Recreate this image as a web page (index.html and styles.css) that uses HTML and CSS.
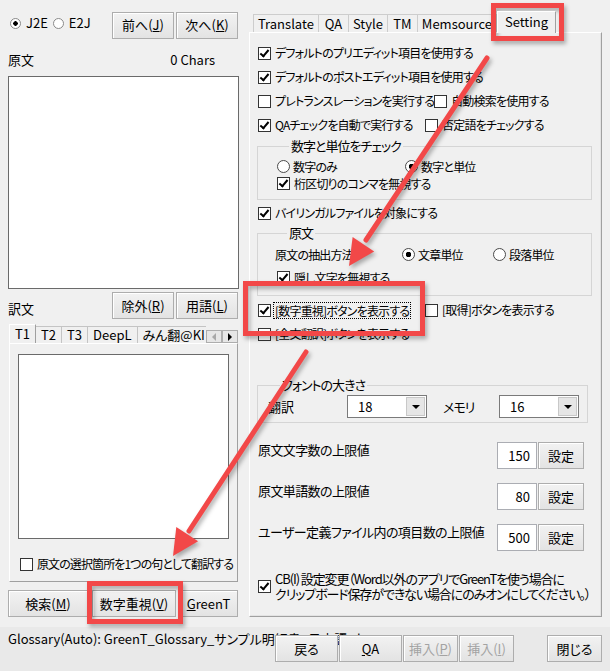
FILE: index.html
```html
<!DOCTYPE html>
<html lang="ja">
<head>
    <meta charset="UTF-8">
    <title>GreenT - Setting</title>
    <link rel="stylesheet" href="styles.css">
</head>
<body>
<div class="app">
    <div class="main">
        <div class="left">
            <div class="top-row">
                <div class="mode">
                    <span class="rb small on"></span><span>J2E</span>
                    <span class="rb small gap"></span><span>E2J</span>
                </div>
                <div class="btn-pair">
                    <button class="btn">前へ(<u>J</u>)</button>
                    <button class="btn">次へ(<u>K</u>)</button>
                </div>
            </div>
            <div class="label-row"><span>原文</span><span>0 Chars</span></div>
            <div class="textbox source"></div>
            <div class="label-row2">
                <span class="lbl">訳文</span>
                <div class="btn-pair">
                    <button class="btn">除外(<u>R</u>)</button>
                    <button class="btn">用語(<u>L</u>)</button>
                </div>
            </div>
            <div class="ttabs">
                <div class="ttabs-list">
                    <span class="ttab sel">T1</span>
                    <span class="ttab">T2</span>
                    <span class="ttab">T3</span>
                    <span class="ttab">DeepL</span>
                    <span class="ttab">みん翻@KI</span>
                    <span class="ttab">Text</span>
                </div>
                <div class="tscroll">
                    <span class="arr prev"></span>
                    <span class="arr next"></span>
                </div>
            </div>
            <div class="tpanel">
                <div class="textbox target"></div>
                <div class="row tight"><span class="cb"></span>原文の選択箇所を1つの句として翻訳する</div>
            </div>
            <div class="bottom-btns">
                <button class="btn b-search">検索(<u>M</u>)</button>
                <button class="btn b-num">数字重視(<u>V</u>)</button>
                <button class="btn b-green"><u>G</u>reenT</button>
            </div>
        </div>

        <div class="right">
            <div class="tabs">
                <span class="tab">Translate</span>
                <span class="tab">QA</span>
                <span class="tab">Style</span>
                <span class="tab">TM</span>
                <span class="tab">Memsource</span>
                <span class="tab sel">Setting</span>
            </div>
            <div class="panel">
                <div class="row"><span class="cb on"></span>デフォルトのプリエディット項目を使用する</div>
                <div class="row"><span class="cb on"></span>デフォルトのポストエディット項目を使用する</div>
                <div class="row">
                    <div class="col"><span class="cb"></span>プレトランスレーションを実行する</div>
                    <div class="col"><span class="cb"></span>自動検索を使用する</div>
                </div>
                <div class="row">
                    <div class="col"><span class="cb on"></span>QAチェックを自動で実行する</div>
                    <div class="col"><span class="cb"></span>否定語をチェックする</div>
                </div>

                <fieldset class="group g-num">
                    <legend>数字と単位をチェック</legend>
                    <div class="grow">
                        <div class="gcol"><span class="rb"></span>数字のみ</div>
                        <div><span class="rb on"></span>数字と単位</div>
                    </div>
                    <div class="grow"><span class="cb on"></span>桁区切りのコンマを無視する</div>
                </fieldset>

                <div class="row after-group"><span class="cb on"></span>バイリンガルファイルを対象にする</div>

                <fieldset class="group g-src">
                    <legend>原文</legend>
                    <div class="grow">
                        <span class="extract">原文の抽出方法</span>
                        <div class="gcol2"><span class="rb on"></span>文章単位</div>
                        <div><span class="rb"></span>段落単位</div>
                    </div>
                    <div class="grow"><span class="cb on indent"></span>隠し文字を無視する</div>
                </fieldset>

                <div class="row after-group2">
                    <div class="col"><span class="cb on"></span><span class="focus">[数字重視]ボタンを表示する</span></div>
                    <div class="col"><span class="cb"></span>[取得]ボタンを表示する</div>
                </div>
                <div class="row"><span class="cb"></span>[全文翻訳]ボタンを表示する</div>

                <fieldset class="group g-font">
                    <legend>フォントの大きさ</legend>
                    <div class="font-row">
                        <span class="flabel">翻訳</span>
                        <div class="combo"><span class="val">18</span><span class="drop"></span></div>
                        <span class="flabel2">メモリ</span>
                        <div class="combo"><span class="val">16</span><span class="drop"></span></div>
                    </div>
                </fieldset>

                <div class="limit first">
                    <span class="ltext">原文文字数の上限値</span>
                    <span class="num">150</span>
                    <button class="btn set">設定</button>
                </div>
                <div class="limit">
                    <span class="ltext">原文単語数の上限値</span>
                    <span class="num">80</span>
                    <button class="btn set">設定</button>
                </div>
                <div class="limit">
                    <span class="ltext">ユーザー定義ファイル内の項目数の上限値</span>
                    <span class="num">500</span>
                    <button class="btn set">設定</button>
                </div>

                <div class="cb-row">
                    <span class="cb on"></span>
                    <span class="multi">CB(I) 設定変更（Word以外のアプリでGreenTを使う場合に<br>クリップボード保存ができない場合にのみオンにしてください。）</span>
                </div>
            </div>
        </div>
    </div>

    <div class="status">
        <span>Glossary(Auto): GreenT_Glossary_サンプル明細書_日本語.xlsx</span>
        <div class="actions">
            <button class="btn w63">戻る</button>
            <button class="btn w63"><u>Q</u>A</button>
            <button class="btn w55 off">挿入(<u>P</u>)</button>
            <button class="btn w55 off">挿入(<u>I</u>)</button>
            <button class="btn w55 close">閉じる</button>
        </div>
    </div>

    <!-- annotation overlay -->
    <svg class="notes" width="610" height="671" viewBox="0 0 610 671">
        <g class="mark">
            <rect x="493.5" y="5.5" width="68" height="33"/>
            <rect x="245.5" y="283.5" width="177" height="50"/>
            <rect x="89.5" y="583.5" width="91" height="38"/>
            <line x1="487" y1="58" x2="366" y2="240"/>
            <polygon points="349,266 374.2,251.5 352.6,237.1"/>
            <line x1="306" y1="352" x2="189" y2="531"/>
            <polygon points="173,556 198.1,541.3 176.3,527.1"/>
        </g>
    </svg>
</div>
</body>
</html>
```

FILE: styles.css
```css
body {
    margin: 0;
    background: #f0f0f0;
    font-family: "Noto Sans CJK JP", sans-serif;
    font-size: 13px;
    font-feature-settings: "palt";
    color: #000;
}

.app {
    position: relative;
    width: 610px;
    height: 671px;
    overflow: hidden;
    background: #f0f0f0;
}

.main {
    display: flex;
    height: 627px;
}

/* ---------- common controls ---------- */

.btn {
    font: inherit;
    font-feature-settings: "palt";
    height: 27px;
    padding: 0;
    color: #000;
    background: linear-gradient(#f2f2f2, #e3e3e3);
    border: 1px solid #adadad;
    box-shadow: inset 1px 1px 0 #fff;
    line-height: 24px;
}

.btn.off {
    color: #a3a3a3;
}

.textbox {
    background: #fff;
    border: 1px solid #6a6a6a;
    box-sizing: border-box;
}

.cb {
    position: relative;
    width: 13px;
    height: 13px;
    flex-shrink: 0;
    box-sizing: border-box;
    border: 1px solid #333;
    background: #fff;
    margin-right: 4px;
}

.cb.on::after {
    content: "";
    position: absolute;
    left: 3px;
    top: 0px;
    width: 3px;
    height: 7px;
    border: solid #000;
    border-width: 0 2px 2px 0;
    transform: rotate(40deg);
}

.rb {
    width: 13px;
    height: 13px;
    flex-shrink: 0;
    box-sizing: border-box;
    border: 1px solid #4a4a4a;
    border-radius: 50%;
    background: #fff;
    margin-right: 3px;
}

.rb.on {
    background: radial-gradient(circle, #000 0 2.5px, #fff 3px);
}

.rb.small {
    width: 11px;
    height: 11px;
    border-color: #8a8a8a;
    margin-right: 5px;
}

.rb.small.on {
    background: radial-gradient(circle, #000 0 2px, #fff 2.5px);
}

.rb.gap {
    margin-left: 5px;
}

/* ---------- left pane ---------- */

.left {
    width: 239px;
    padding-left: 8px;
    box-sizing: border-box;
}

.top-row {
    display: flex;
    justify-content: space-between;
    align-items: center;
    height: 26px;
    margin-top: 12px;
    padding-right: 1px;
}

.mode {
    display: flex;
    align-items: center;
    padding-left: 2px;
    margin-bottom: 4px;
    line-height: 16px;
}

.btn-pair {
    display: flex;
    gap: 2px;
}

.btn-pair .btn {
    width: 62px;
}

.label-row {
    display: flex;
    justify-content: space-between;
    padding: 14px 24px 8px 0;
    line-height: 16px;
}

.source {
    width: 231px;
    height: 213px;
}

.label-row2 {
    display: flex;
    justify-content: space-between;
    align-items: flex-end;
    height: 27px;
    margin-top: 3px;
    padding-right: 1px;
}

.label-row2 .lbl {
    line-height: 16px;
    padding-bottom: 2px;
}

.ttabs {
    display: flex;
    align-items: flex-end;
    height: 24px;
    padding-left: 1px;
    width: 230px;
    box-sizing: border-box;
}

.ttabs-list {
    display: flex;
    align-items: flex-end;
    flex: 1;
    min-width: 0;
    overflow: hidden;
}

.ttab {
    flex-shrink: 0;
    height: 16px;
    line-height: 16px;
    padding: 0 5px;
    white-space: nowrap;
    border: 1px solid #c4c4c4;
    border-bottom: none;
    margin-right: -1px;
    background: #f0f0f0;
}

.ttab.sel {
    height: 19px;
    line-height: 18px;
    border-color: #fff #a0a0a0 #a0a0a0 #fff;
    position: relative;
    z-index: 1;
    margin-bottom: -1px;
}

.tscroll {
    display: flex;
}

.arr {
    width: 16px;
    height: 13px;
    box-sizing: border-box;
    border: 1px solid #adadad;
    background: #e6e6e6;
    display: flex;
    align-items: center;
    justify-content: center;
}

.arr::after {
    content: "";
    border-top: 4px solid transparent;
    border-bottom: 4px solid transparent;
}

.arr.prev::after {
    border-right: 4px solid #a8a8a8;
}

.arr.next::after {
    border-left: 4px solid #000;
}

.tpanel {
    width: 229px;
    height: 239px;
    margin-left: 1px;
    box-sizing: border-box;
    border: 1px solid;
    border-color: #fff #a0a0a0 #a0a0a0 #fff;
    padding: 10px 0 0 8px;
}

.target {
    width: 211px;
    height: 185px;
}

.tpanel .row {
    margin-top: 13px;
    padding-left: 2px;
    font-size: 12px;
    letter-spacing: -0.9px;
}

.bottom-btns {
    display: flex;
    margin-top: 8px;
}

.b-search {
    width: 80px;
}

.b-num {
    width: 84px;
    margin-left: 4px;
}

.b-green {
    width: 59px;
    margin-left: 3px;
}

/* ---------- right pane ---------- */

.right {
    width: 353px;
    margin-left: 10px;
}

.tabs {
    display: flex;
    align-items: flex-end;
    height: 20px;
    margin-top: 12px;
    padding-left: 4px;
}

.tab {
    height: 18px;
    min-width: 31px;
    line-height: 18px;
    padding: 0 4px;
    text-align: center;
    white-space: nowrap;
    border: 1px solid #cdcdcd;
    border-bottom: none;
    margin-right: -1px;
    background: #f0f0f0;
    box-sizing: border-box;
}

.tab.sel {
    height: 22px;
    line-height: 19px;
    padding: 0 7px;
    margin: 0 0 -1px 1px;
    border-color: #fff #a0a0a0 #a0a0a0 #fff;
    position: relative;
    z-index: 1;
}

.panel {
    height: 585px;
    box-sizing: border-box;
    border: 1px solid;
    border-color: #fff #a0a0a0 #a0a0a0 #fff;
    box-shadow: inset -1px -1px 0 #e3e3e3;
    padding: 8px 9px 0 8px;
}

.row {
    display: flex;
    align-items: center;
    height: 24px;
    line-height: 16px;
    white-space: nowrap;
}

.panel .row,
.grow {
    font-size: 12px;
    letter-spacing: -0.8px;
}

.col {
    display: flex;
    align-items: center;
    width: 185px;
}

.focus {
    border: 1px dotted #000;
    padding: 0 1px;
    margin-left: -2px;
    line-height: 15px;
}

.group {
    margin: 0 0 0 -1px;
    border: 1px solid #d5d5d5;
    min-inline-size: 0;
}

.group legend {
    padding: 0 2px;
    margin-left: 12px;
    line-height: 16px;
    letter-spacing: -1px;
}

.g-num {
    margin-top: 1px;
    padding: 4px 0 7px 19px;
}

.grow {
    display: flex;
    align-items: center;
    height: 17px;
    line-height: 16px;
    white-space: nowrap;
}

.grow > div {
    display: flex;
    align-items: center;
}

.gcol {
    width: 128px;
}

.after-group {
    margin-top: 1px;
}

.g-src {
    padding: 2px 0 6px 17px;
}

.g-src .grow {
    height: 23px;
}

.extract {
    width: 127px;
}

.gcol2 {
    width: 91px;
}

.cb.indent {
    margin-left: 2px;
}

.after-group2 {
    margin-top: 2px;
}

.g-font {
    margin: 31px 4px 0 -1px;
    padding: 2px 0 4px 10px;
}

.font-row {
    display: flex;
    align-items: center;
    height: 23px;
}

.flabel {
    width: 79px;
}

.flabel2 {
    width: 56px;
    margin-left: 16px;
    letter-spacing: -1px;
}

.combo {
    display: flex;
    width: 80px;
    height: 23px;
    box-sizing: border-box;
    border: 1px solid #7a7a7a;
    background: #fff;
}

.combo .val {
    flex: 1;
    padding-left: 10px;
    line-height: 21px;
}

.combo .drop {
    width: 17px;
    margin: 1px;
    background: #e6e6e6;
    border: 1px solid #c8c8c8;
    display: flex;
    align-items: center;
    justify-content: center;
}

.combo .drop::after {
    content: "";
    border-top: 4px solid #000;
    border-left: 4px solid transparent;
    border-right: 4px solid transparent;
}

.limit {
    display: flex;
    align-items: flex-start;
    height: 27px;
    margin-top: 14px;
}

.limit.first {
    margin-top: 19px;
}

.ltext {
    flex: 1;
    line-height: 16px;
    letter-spacing: -0.6px;
}

.num {
    width: 40px;
    height: 27px;
    box-sizing: border-box;
    border: 1px solid #abadb3;
    background: #fff;
    text-align: right;
    padding-right: 6px;
    line-height: 25px;
}

.btn.set {
    width: 46px;
    margin: 0 8px 0 1px;
}

.cb-row {
    display: flex;
    align-items: center;
    margin-top: 20px;
}

.multi {
    line-height: 15px;
    white-space: nowrap;
    letter-spacing: -1.1px;
}

/* ---------- status bar ---------- */

.status {
    position: relative;
    height: 44px;
    background: #e9e9e9;
    padding-left: 8px;
    line-height: 24px;
    white-space: nowrap;
}

.actions {
    position: absolute;
    left: 275px;
    top: 8px;
    width: 327px;
    display: flex;
    gap: 1px;
}

.w63 {
    width: 63px;
}

.w55 {
    width: 55px;
}

.btn.close {
    margin-left: auto;
}

/* ---------- red annotations ---------- */

.notes {
    position: absolute;
    left: 0;
    top: 0;
    pointer-events: none;
}

.mark {
    filter: drop-shadow(2px 3px 2px rgba(0, 0, 0, 0.3));
}

.mark rect,
.mark line {
    fill: none;
    stroke: #f24848;
    stroke-width: 5;
    stroke-linecap: round;
}

.mark polygon {
    fill: #f24848;
}
```
